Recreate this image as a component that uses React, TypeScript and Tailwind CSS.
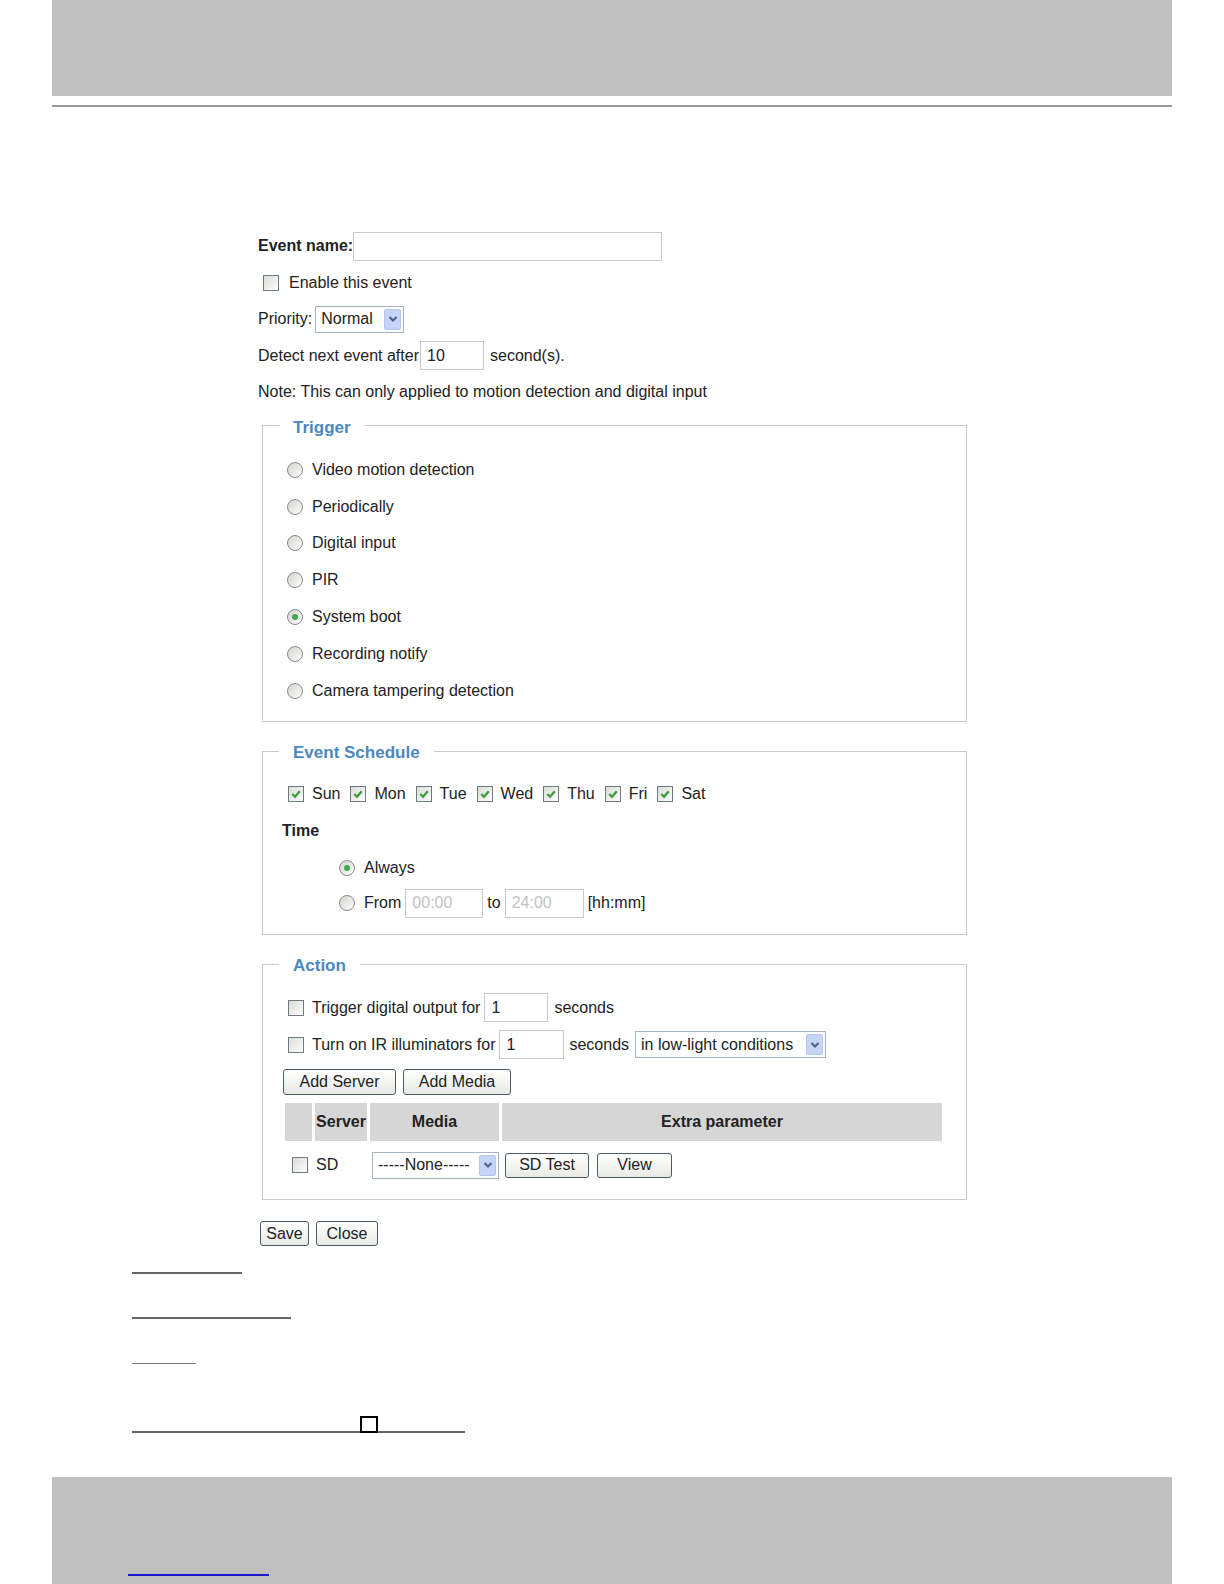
import React from "react";

const Check = ({ checked = false, cls = "" }: { checked?: boolean; cls?: string }) => (
  <span className={"flex w-[16px] h-[16px] shrink-0 items-center justify-center border border-[#6f7a80] bg-linear-to-br from-[#d9dcd6] to-white " + cls}>
    {checked && (
      <svg width="12" height="12" viewBox="0 0 12 12">
        <path d="M2.3 6 L5 8.8 L9.8 3.2" fill="none" stroke="#3f9d3c" strokeWidth="2.3" />
      </svg>
    )}
  </span>
);

const Radio = ({ checked = false }: { checked?: boolean }) => (
  <span className="flex w-[16px] h-[16px] shrink-0 items-center justify-center rounded-full border border-[#858a8c] bg-linear-to-br from-[#d2d4cf] to-white">
    {checked && <span className="w-[6px] h-[6px] rounded-full bg-[#3fa84a]" />}
  </span>
);

const TextInput = ({ w, value = "", disabled = false }: { w: string; value?: string; disabled?: boolean }) => (
  <span
    className={
      "flex h-[29px] shrink-0 items-center border border-[#c9c9c9] bg-white pl-[6px] " +
      w +
      (disabled ? " text-[#c2c2c2]" : " text-[#222]")
    }
  >
    {value}
  </span>
);

const Select = ({ w, value }: { w: string; value: string }) => (
  <span className={"flex h-[27px] shrink-0 items-center justify-between border border-[#a4b2c6] bg-white pl-[5px] pr-[2px] " + w}>
    <span className="whitespace-nowrap">{value}</span>
    <span className="flex w-[17px] h-[21px] items-center justify-center rounded-[2px] border border-[#b6c7ec] bg-[#c6d5f6]">
      <svg width="10" height="8" viewBox="0 0 10 8">
        <path d="M1.5 2 L5 5.5 L8.5 2" fill="none" stroke="#4b5e86" strokeWidth="2" />
      </svg>
    </span>
  </span>
);

const Button = ({ w, h = "h-[26px]", children }: { w: string; h?: string; children: React.ReactNode }) => (
  <span
    className={
      "flex shrink-0 items-center justify-center rounded-[3px] border border-[#4c5866] bg-linear-to-b from-white to-[#e9e9e4] text-[#222] " +
      w +
      " " +
      h
    }
  >
    {children}
  </span>
);

const Legend = ({ children }: { children: React.ReactNode }) => (
  <legend className="ml-[16px] px-[14px] text-[17px] leading-[20px] font-bold text-[#4b88c2]">
    <span className="relative top-[2px]">{children}</span>
  </legend>
);

export default function App() {
  const triggers = [
    "Video motion detection",
    "Periodically",
    "Digital input",
    "PIR",
    "System boot",
    "Recording notify",
    "Camera tampering detection",
  ];
  const days = ["Sun", "Mon", "Tue", "Wed", "Thu", "Fri", "Sat"];

  return (
    <div className="w-[1224px] h-[1584px] overflow-hidden bg-white font-['Liberation_Sans',Arial,sans-serif] text-[16px] text-[#222] flex flex-col">
      {/* header */}
      <div className="ml-[52px] w-[1120px] h-[96px] shrink-0 bg-[#c0c0c0]" />
      <div className="ml-[52px] mt-[9px] w-[1120px] h-[2px] shrink-0 bg-[#9a9a9a]" />

      {/* form */}
      <div className="ml-[258px] mt-[121px] w-[712px] flex flex-col">
        <div className="h-[36.5px] flex items-center">
          <span className="font-bold">Event name:</span>
          <TextInput w="w-[309px]" />
        </div>
        <div className="h-[36.5px] flex items-center">
          <Check cls="ml-[5px]" />
          <span className="ml-[10px]">Enable this event</span>
        </div>
        <div className="h-[36.5px] flex items-center">
          <span>Priority:</span>
          <span className="ml-[3px] flex">
            <Select w="w-[89px]" value="Normal" />
          </span>
        </div>
        <div className="h-[36.5px] flex items-center">
          <span>Detect next event after</span>
          <span className="ml-[1px] flex">
            <TextInput w="w-[64px]" value="10" />
          </span>
          <span className="ml-[6px]">second(s).</span>
        </div>
        <div className="h-[36.5px] flex items-center">
          <span>Note: This can only applied to motion detection and digital input</span>
        </div>

        {/* Trigger */}
        <fieldset className="ml-[4px] mt-[5px] w-[705px] border border-[#cacaca]">
          <Legend>Trigger</Legend>
          <div className="pt-[16px] pb-[12px] pl-[24px] flex flex-col">
            {triggers.map((t) => (
              <div key={t} className="h-[36.8px] flex items-center">
                <Radio checked={t === "System boot"} />
                <span className="ml-[9px]">{t}</span>
              </div>
            ))}
          </div>
        </fieldset>

        {/* Event Schedule */}
        <fieldset className="ml-[4px] mt-[19px] w-[705px] border border-[#cacaca]">
          <Legend>Event Schedule</Legend>
          <div className="pt-[15px] pb-[13px] pl-[19px] flex flex-col">
            <div className="h-[36px] flex items-center ml-[6px]">
              {days.map((d) => (
                <span key={d} className="flex items-center mr-[10px]">
                  <Check checked />
                  <span className="ml-[8px]">{d}</span>
                </span>
              ))}
            </div>
            <div className="h-[38px] flex items-center font-bold">Time</div>
            <div className="h-[35px] flex items-center ml-[57px]">
              <Radio checked />
              <span className="ml-[9px]">Always</span>
            </div>
            <div className="h-[36px] flex items-center ml-[57px]">
              <Radio />
              <span className="ml-[9px]">From</span>
              <span className="ml-[4px] flex">
                <TextInput w="w-[78px]" value="00:00" disabled />
              </span>
              <span className="ml-[4px]">to</span>
              <span className="ml-[4px] flex">
                <TextInput w="w-[79px]" value="24:00" disabled />
              </span>
              <span className="ml-[4px]">[hh:mm]</span>
            </div>
          </div>
        </fieldset>

        {/* Action */}
        <fieldset className="ml-[4px] mt-[19px] w-[705px] border border-[#cacaca]">
          <Legend>Action</Legend>
          <div className="pt-[15px] pb-[13px] pl-[20px] flex flex-col">
            <div className="h-[37px] flex items-center">
              <Check cls="ml-[5px]" />
              <span className="ml-[8px]">Trigger digital output for</span>
              <span className="ml-[4px] flex">
                <TextInput w="w-[64px]" value="1" />
              </span>
              <span className="ml-[6px]">seconds</span>
            </div>
            <div className="h-[37px] flex items-center">
              <Check cls="ml-[5px]" />
              <span className="ml-[8px]">Turn on IR illuminators for</span>
              <span className="ml-[4px] flex">
                <TextInput w="w-[65px]" value="1" />
              </span>
              <span className="ml-[5px]">seconds</span>
              <span className="ml-[6px] flex">
                <Select w="w-[191px]" value="in low-light conditions" />
              </span>
            </div>
            <div className="mt-[6px] flex items-center">
              <Button w="w-[113px]">Add Server</Button>
              <span className="ml-[7px] flex">
                <Button w="w-[108px]">Add Media</Button>
              </span>
            </div>
            <div className="mt-[8px] ml-[2px] grid grid-cols-[27px_52px_129px_440px] gap-x-[3px] gap-y-[3px]">
              <div className="h-[38px] bg-[#d6d6d6]" />
              <div className="h-[38px] bg-[#d6d6d6] flex items-center justify-center font-bold">Server</div>
              <div className="h-[38px] bg-[#d6d6d6] flex items-center justify-center font-bold">Media</div>
              <div className="h-[38px] bg-[#d6d6d6] flex items-center justify-center font-bold">Extra parameter</div>

              <div className="h-[42px] flex items-center pl-[7px]">
                <Check />
              </div>
              <div className="h-[42px] flex items-center pl-[1px]">SD</div>
              <div className="h-[42px] flex items-center pl-[2px]">
                <Select w="w-[127px]" value="-----None-----" />
              </div>
              <div className="h-[42px] flex items-center pl-[3px]">
                <Button w="w-[84px]" h="h-[25px]">SD Test</Button>
                <span className="ml-[8px] flex">
                  <Button w="w-[75px]" h="h-[25px]">View</Button>
                </span>
              </div>
            </div>
          </div>
        </fieldset>

        <div className="mt-[21px] ml-[2px] flex items-center">
          <Button w="w-[49px]" h="h-[25px]">Save</Button>
          <span className="ml-[7px] flex">
            <Button w="w-[62px]" h="h-[25px]">Close</Button>
          </span>
        </div>
      </div>

      {/* rules */}
      <div className="ml-[132px] mt-[26px] w-[110px] h-[2px] shrink-0 bg-[#666]" />
      <div className="ml-[132px] mt-[43px] w-[159px] h-[2px] shrink-0 bg-[#666]" />
      <div className="ml-[132px] mt-[44px] w-[64px] h-[1px] shrink-0 bg-[#777]" />
      <div className="relative ml-[132px] mt-[67px] w-[333px] h-[2px] shrink-0 bg-[#666]">
        <span className="absolute left-[228px] bottom-[0px] w-[18px] h-[17px] border-2 border-black bg-white" />
      </div>

      {/* footer */}
      <div className="ml-[52px] mt-[44px] w-[1120px] h-[108px] shrink-0 bg-[#c0c0c0] pt-[97px] pl-[76px]">
        <div className="w-[141px] h-[2px] bg-[#1a1acc]" />
      </div>
    </div>
  );
}
